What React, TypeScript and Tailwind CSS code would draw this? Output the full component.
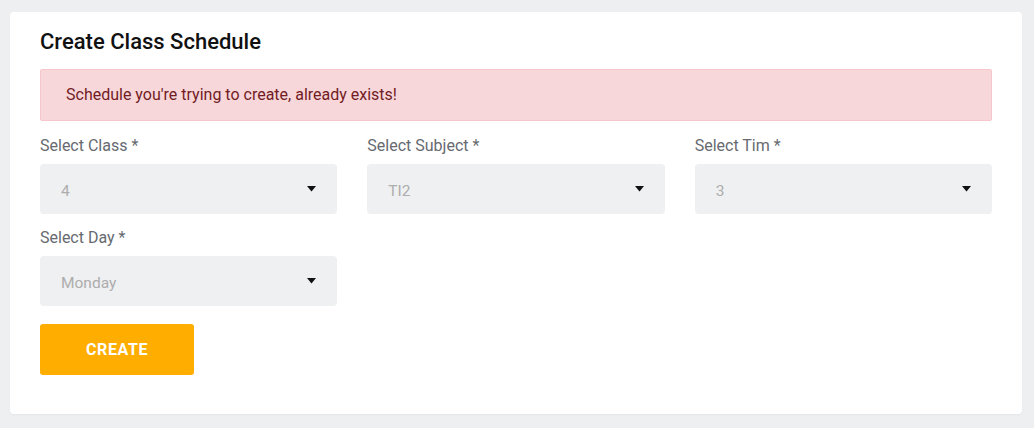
import React from "react";

function Arrow() {
  return (
    <svg width="9" height="6" viewBox="0 0 9 6" className="shrink-0">
      <path d="M0 0 H9 L4.5 5.5 Z" fill="#111" />
    </svg>
  );
}

function Field({ label, value }: { label: string; value: string }) {
  return (
    <div className="flex flex-col">
      <label className="text-[16px] leading-[24px] pt-[1px] text-[#666a70] mb-[6px]">{label}</label>
      <div className="h-[50px] rounded-[4px] bg-[#eff0f2] flex items-center justify-between pl-[21px] pr-[21px]">
        <span className="text-[15.5px] leading-[20px] pt-[3px] text-[#adadad]">{value}</span>
        <Arrow />
      </div>
    </div>
  );
}

export default function App() {
  return (
    <div
      className="min-h-[428px] w-full bg-[#eeeff1] pt-[12px] pl-[10px] pr-[12px] pb-[14px]"
      style={{ fontFamily: "Roboto, 'Noto Sans', sans-serif" }}
    >
      <div className="bg-white rounded-[4px] px-[30px] pt-[18px] pb-[39px] shadow-[0_1px_2px_rgba(0,0,0,0.04)]">
        <h1 className="text-[22px] leading-[24px] font-medium text-[#111]">Create Class Schedule</h1>
        <div className="mt-[15px] h-[52px] flex items-center border border-[#f5c6cb] bg-[#f8d7da] rounded-[2px] px-[25px] text-[16px] text-[#721c24]">
          Schedule you're trying to create, already exists!
        </div>
        <div className="mt-[12px] grid grid-cols-3 gap-x-[30px] gap-y-[11px]">
          <Field label="Select Class *" value="4" />
          <Field label="Select Subject *" value="TI2" />
          <Field label="Select Tim *" value="3" />
          <Field label="Select Day *" value="Monday" />
        </div>
        <button className="mt-[18px] w-[154px] h-[51px] rounded-[3px] bg-[#ffae00] text-white font-bold text-[16px] tracking-[0.6px] uppercase">
          Create
        </button>
      </div>
    </div>
  );
}
